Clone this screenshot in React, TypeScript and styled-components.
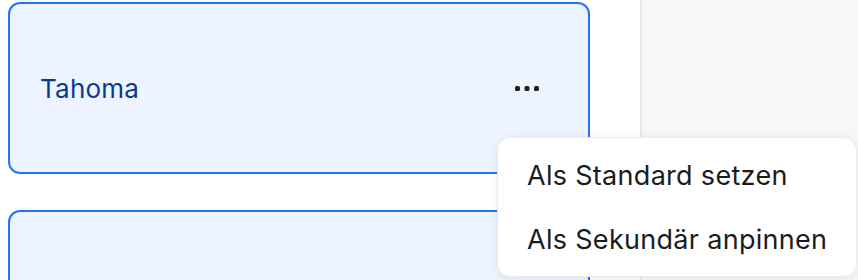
import styled, { createGlobalStyle } from "styled-components";

const GlobalStyle = createGlobalStyle`
  html, body {
    margin: 0;
    padding: 0;
    background: #ffffff;
    font-family: Inter, "Noto Sans", sans-serif;
  }
`;

const Page = styled.div`
  position: relative;
  display: flex;
  width: 858px;
  height: 280px;
  overflow: hidden;
`;

const FontList = styled.div`
  display: flex;
  flex-direction: column;
  gap: 36px;
  width: 640px;
  box-sizing: border-box;
  padding: 2px 50px 0 8px;
`;

const Divider = styled.div`
  width: 2px;
  background: #e6e6e6;
`;

const SidePanel = styled.div`
  flex: 1;
  background: #f7f7f7;
`;

const FontCard = styled.div<{ $selected?: boolean }>`
  flex-shrink: 0;
  display: flex;
  align-items: center;
  justify-content: space-between;
  height: 172px;
  box-sizing: border-box;
  padding: 0 48px 0 30px;
  border: 2px solid ${(p) => (p.$selected ? "#2276f5" : "#d9d9d9")};
  border-radius: 12px;
  background: ${(p) => (p.$selected ? "#edf3ff" : "#ffffff")};
`;

const FontName = styled.span`
  font-size: 26px;
  font-weight: 400;
  color: #0b3a8c;
  letter-spacing: 0.2px;
`;

const MoreButton = styled.button`
  display: flex;
  align-items: center;
  justify-content: center;
  padding: 0;
  border: none;
  background: transparent;
  cursor: pointer;
`;

const Menu = styled.div`
  position: absolute;
  left: 497px;
  top: 137px;
  width: 360px;
  box-sizing: border-box;
  padding: 5px 0;
  background: #ffffff;
  border: 1px solid #ececec;
  border-radius: 13px;
  box-shadow: 0 2px 10px rgba(0, 0, 0, 0.08);
`;

const MenuItem = styled.div`
  display: flex;
  align-items: center;
  height: 64px;
  padding-left: 29px;
  font-size: 27px;
  letter-spacing: 0.3px;
  color: #1c1c1c;
  cursor: pointer;
`;

const Dots = () => (
  <svg width="26" height="8" viewBox="0 0 26 8">
    <rect x="1" y="2" width="5" height="5" rx="1.6" fill="#1f1f1f" />
    <rect x="10.5" y="2" width="5" height="5" rx="1.6" fill="#1f1f1f" />
    <rect x="20" y="2" width="5" height="5" rx="1.6" fill="#1f1f1f" />
  </svg>
);

const App = () => {
  return (
    <>
      <GlobalStyle />
      <Page>
        <FontList>
          <FontCard $selected>
            <FontName>Tahoma</FontName>
            <MoreButton>
              <Dots />
            </MoreButton>
          </FontCard>
          <FontCard $selected />
        </FontList>
        <Divider />
        <SidePanel />
        <Menu>
          <MenuItem>Als Standard setzen</MenuItem>
          <MenuItem>Als Sekundär anpinnen</MenuItem>
        </Menu>
      </Page>
    </>
  );
};
export default App;
